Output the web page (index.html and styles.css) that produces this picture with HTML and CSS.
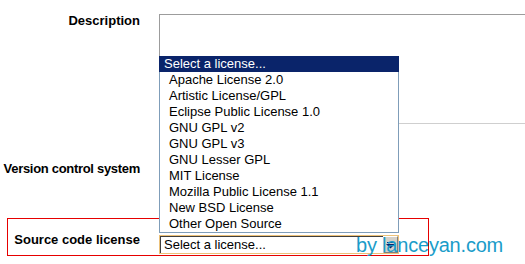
FILE: index.html
```html
<!DOCTYPE html>
<html lang="en">
<head>
  <meta charset="UTF-8">
  <title>Project details</title>
  <link rel="stylesheet" href="styles.css">
</head>
<body>
  <form class="form">
    <div class="row row-desc">
      <label class="label">Description</label>
      <div class="textbox"></div>
    </div>

    <div class="row row-vcs">
      <label class="label">Version control system</label>
      <div></div>
    </div>

    <div class="row row-license">
      <label class="label">Source code license</label>
      <div class="picker">
        <ul class="options">
          <li class="selected">Select a license...</li>
          <li>Apache License 2.0</li>
          <li>Artistic License/GPL</li>
          <li>Eclipse Public License 1.0</li>
          <li>GNU GPL v2</li>
          <li>GNU GPL v3</li>
          <li>GNU Lesser GPL</li>
          <li>MIT License</li>
          <li>Mozilla Public License 1.1</li>
          <li>New BSD License</li>
          <li>Other Open Source</li>
        </ul>
        <div class="select">
          <span class="select-text">Select a license...</span>
          <span class="select-btn">
            <svg width="9" height="7" viewBox="0 0 9 7">
              <rect x="1" y="0" width="7" height="1" fill="#0a246a"/>
              <polygon points="0,2 9,2 4.5,6.5" fill="#0a246a"/>
            </svg>
          </span>
        </div>
      </div>
    </div>
  </form>

  <div class="watermark">by lanceyan.com</div>
</body>
</html>
```

FILE: styles.css
```css
body {
  margin: 0;
  width: 525px;
  height: 264px;
  overflow: hidden;
  position: relative;
  background-color: #fff;
  font-family: "Liberation Sans", Arial, sans-serif;
  color: #000;
}

.form {
  padding-top: 14px;
}

.row {
  display: grid;
  grid-template-columns: 140px 1fr;
  column-gap: 19px;
}

.label {
  font-size: 13px;
  font-weight: bold;
  line-height: 15px;
  text-align: right;
  white-space: nowrap;
}

.row-desc .label {
  margin-top: -1px;
}

/* textarea runs past the right edge, so no right border */
.textbox {
  height: 110px;
  box-sizing: border-box;
  border: 1px solid #cfcfcf;
  border-right: none;
  border-top-color: #9c9c9c;
  border-left-color: #9c9c9c;
}

.row-vcs {
  height: 94px;
}

.row-vcs .label {
  padding-top: 37px;
  letter-spacing: -0.3px;
  margin-left: -6px;
}

/* boxed row */
.row-license {
  margin-left: 7px;
  width: 422px;
  height: 38px;
  box-sizing: border-box;
  border: 1px solid #e60000;
  grid-template-columns: 132px 1fr;
}

.row-license .label {
  padding-top: 13px;
}

.picker {
  position: relative;
  margin-top: 16px;
  width: 240px;
}

.options {
  position: absolute;
  left: 0;
  bottom: 100%;
  margin: 0 0 2px 0;
  padding: 0;
  list-style: none;
  width: 240px;
  box-sizing: border-box;
  background-color: #fff;
  border: 1px solid #7f9db9;
  border-top: none;
  font-size: 13px;
}

.options li {
  height: 16px;
  line-height: 16px;
  padding-left: 9px;
  white-space: nowrap;
}

.options li.selected {
  background-color: #0a246a;
  color: #fff;
  padding-left: 5px;
  margin-left: -1px;
  margin-right: -1px;
}

.select {
  height: 19px;
  box-sizing: border-box;
  border: 1px solid #ecc27a;
  display: flex;
  background-color: #fff;
}

.select-text {
  flex: 1;
  border-top: 1px solid #404040;
  border-left: 1px solid #404040;
  font-size: 13px;
  line-height: 16px;
  padding-left: 3px;
}

.select-btn {
  width: 15px;
  box-sizing: border-box;
  background-color: #d4d0c8;
  border: 1px solid #fff;
  border-right-color: #808080;
  border-bottom-color: #808080;
  display: flex;
  align-items: center;
  justify-content: center;
  padding-top: 2px;
}

.watermark {
  position: absolute;
  left: 356px;
  top: 234px;
  font-family: "Liberation Sans", Arial, sans-serif;
  font-size: 20px;
  letter-spacing: -0.2px;
  color: #1a9cc9;
  line-height: 22px;
}
```
